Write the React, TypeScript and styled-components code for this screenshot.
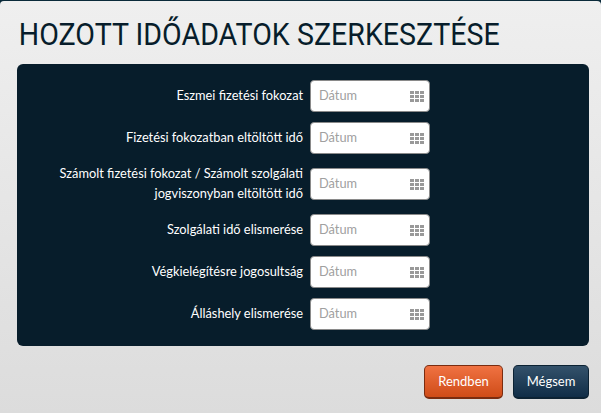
import styled, { createGlobalStyle } from "styled-components";

const GlobalStyle = createGlobalStyle`
  html, body {
    margin: 0;
    padding: 0;
    width: 601px;
    height: 413px;
    overflow: hidden;
    background: #0a2a3a;
  }
`;

const Modal = styled.div`
  box-sizing: border-box;
  width: 601px;
  height: 413px;
  margin-top: 1px;
  padding: 0 12px 0 17px;
  border-radius: 4px 4px 0 0;
  background: linear-gradient(180deg, #efefef 0%, #dcdcdc 100%);
  font-family: "Lato", sans-serif;
`;

const Title = styled.h1`
  margin: 0;
  height: 63px;
  padding: 14px 0 0 2px;
  box-sizing: border-box;
  font-family: "Roboto", sans-serif;
  font-weight: 400;
  font-size: 32px;
  line-height: 38px;
  color: #071d2b;
  white-space: nowrap;
  transform: scaleX(0.894);
  transform-origin: left center;
`;

const Panel = styled.div`
  box-sizing: border-box;
  width: 572px;
  height: 282px;
  padding: 16px 0;
  display: flex;
  flex-direction: column;
  gap: 10px;
  border-radius: 6px;
  background: #071d2b;
`;

const Row = styled.div`
  display: grid;
  grid-template-columns: 286px 120px;
  column-gap: 7px;
  align-items: center;
`;

const Label = styled.label`
  transform: translateY(-1px);
  font-size: 12.8px;
  line-height: 20px;
  color: #fff;
  text-align: right;
`;

const DateField = styled.div`
  box-sizing: border-box;
  height: 32px;
  padding: 0 5px 0 8px;
  display: flex;
  align-items: center;
  justify-content: space-between;
  background: #fff;
  border: 1px solid #8a8a8a;
  border-radius: 4px;
  font-size: 12.8px;
  color: #a0a0a0;
`;

const Placeholder = styled.span`
  margin-top: -2px;
`;

const Footer = styled.div`
  display: flex;
  justify-content: flex-end;
  gap: 10px;
  padding-top: 19px;
`;

const Button = styled.button<{ $primary?: boolean }>`
  box-sizing: border-box;
  width: ${(p) => (p.$primary ? "79px" : "76px")};
  height: 34px;
  padding: 0 0 2px;
  border-radius: 5px;
  border: 1px solid ${(p) => (p.$primary ? "#7a2c10" : "#0c2233")};
  border-bottom-width: 2px;
  background: ${(p) =>
    p.$primary
      ? "linear-gradient(180deg, #f07242 0%, #cf4c18 100%)"
      : "linear-gradient(180deg, #34526b 0%, #102d47 100%)"};
  color: #fff;
  font-family: "Lato", sans-serif;
  font-size: 13px;
`;

const GridIcon = () => (
  <svg width="14" height="11" viewBox="0 0 14 11" fill="#999">
    {[0, 4, 8].map((y) =>
      [0, 5, 10].map((x) => (
        <rect key={`${x}-${y}`} x={x} y={y} width="4" height="3" />
      ))
    )}
  </svg>
);

const rows = [
  "Eszmei fizetési fokozat",
  "Fizetési fokozatban eltöltött idő",
  "Számolt fizetési fokozat / Számolt szolgálati jogviszonyban eltöltött idő",
  "Szolgálati idő elismerése",
  "Végkielégítésre jogosultság",
  "Álláshely elismerése",
];

const App = () => {
  return (
    <>
      <GlobalStyle />
      <Modal>
        <Title>HOZOTT IDŐADATOK SZERKESZTÉSE</Title>
        <Panel>
          {rows.map((label) => (
            <Row key={label}>
              <Label>{label}</Label>
              <DateField>
                <Placeholder>Dátum</Placeholder>
                <GridIcon />
              </DateField>
            </Row>
          ))}
        </Panel>
        <Footer>
          <Button $primary>Rendben</Button>
          <Button>Mégsem</Button>
        </Footer>
      </Modal>
    </>
  );
};

export default App;
